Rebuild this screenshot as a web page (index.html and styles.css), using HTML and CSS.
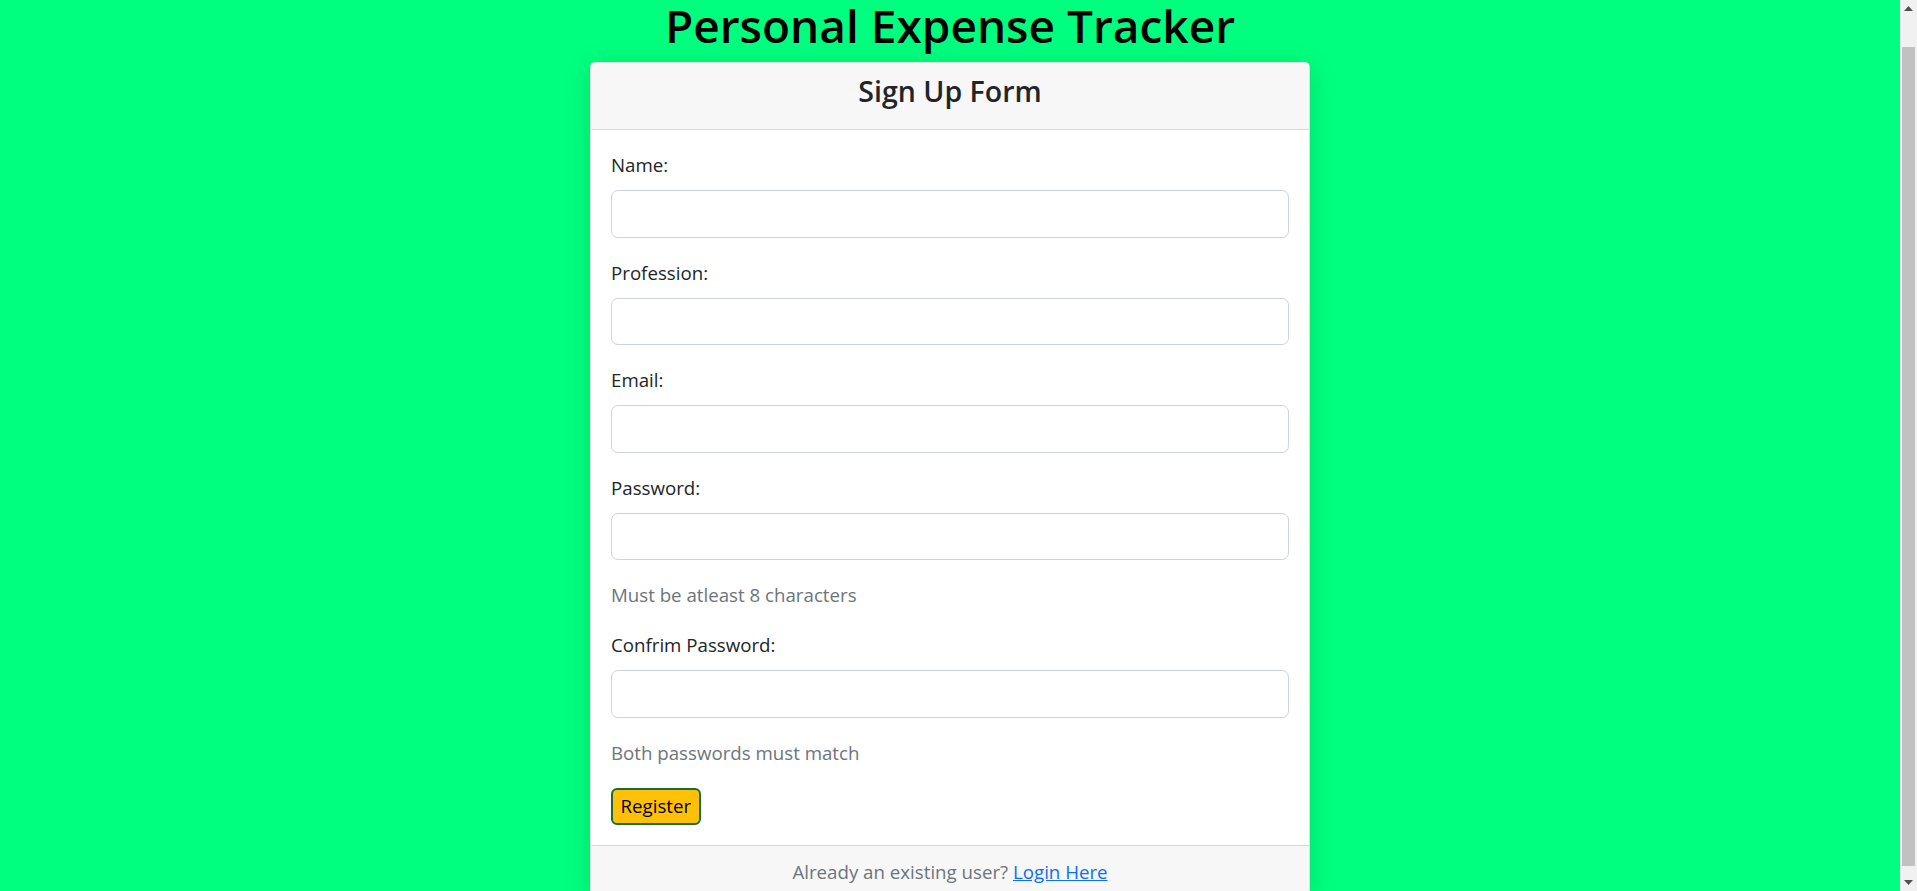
FILE: index.html
```html
<!DOCTYPE html>
<html lang="en">
<head>
<meta charset="utf-8">
<title>Personal Expense Tracker</title>
<link rel="stylesheet" href="styles.css">
</head>
<body>
<div class="page">
  <main class="main">
    <h1 class="title">Personal Expense Tracker</h1>
    <div class="card">
      <div class="card-header"><h4 class="card-title">Sign Up Form</h4></div>
      <form class="card-body">
        <div class="group"><label class="label">Name:</label><input class="input" type="text"></div>
        <div class="group"><label class="label">Profession:</label><input class="input" type="text"></div>
        <div class="group"><label class="label">Email:</label><input class="input" type="email"></div>
        <div class="group"><label class="label">Password:</label><input class="input" type="password"></div>
        <p class="hint">Must be atleast 8 characters</p>
        <div class="group"><label class="label">Confrim Password:</label><input class="input" type="password"></div>
        <p class="hint">Both passwords must match</p>
        <button class="register" type="button">Register</button>
      </form>
      <div class="card-footer">Already an existing user? <a class="link" href="#">Login Here</a></div>
    </div>
  </main>
  <div class="scrollbar">
    <div class="sb-btn"><svg width="9" height="5" viewBox="0 0 9 5"><polygon points="0,5 4.5,0 9,5" fill="#505050"/></svg></div>
    <div class="sb-track"><div class="sb-thumb"></div></div>
    <div class="sb-btn"><svg width="9" height="5" viewBox="0 0 9 5"><polygon points="0,0 9,0 4.5,5" fill="#505050"/></svg></div>
  </div>
</div>
</body>
</html>
```

FILE: styles.css
```css
* { box-sizing: border-box; }
html, body { margin: 0; padding: 0; height: 100%; overflow: hidden; }
body {
  font-family: "Open Sans", "Noto Sans", sans-serif;
  font-size: 18.7px;
  line-height: 30px;
  color: #212529;
  background: #00ff7f;
}
.page { display: flex; height: 100vh; }
.main { flex: 1; overflow: hidden; display: flex; flex-direction: column; align-items: center; }
.title {
  margin: 0 0 12px;
  font-size: 46px;
  line-height: 50px;
  font-weight: 600;
  color: #000;
}
.card {
  width: 720px;
  flex-shrink: 0;
  background: #fff;
  border: 1px solid rgba(0,0,0,.125);
  border-radius: 5px;
  box-shadow: 0 4px 28px rgba(0,0,0,.14);
}
.card-header {
  background: #f7f7f7;
  border-bottom: 1px solid rgba(0,0,0,.125);
  padding: 10px 20px;
  text-align: center;
  border-radius: 4px 4px 0 0;
}
.card-title { margin: 0 0 10px; font-size: 28.5px; line-height: 36px; font-weight: 600; }
.card-body { padding: 20px; display: flex; flex-direction: column; align-items: flex-start; }
.group { display: flex; flex-direction: column; align-self: stretch; margin-bottom: 20px; }
.label { display: block; margin-bottom: 10px; padding-top: 2px; margin-top: -2px; }
.input {
  height: 47.5px;
  border: 1px solid #ced4da;
  border-radius: 7px;
  padding: 7px 15px;
  font: inherit;
  background: #fff;
}
.hint { margin: 0 0 20px; color: #6c757d; padding-top: 2px; margin-top: -2px; }
.register {
  font: inherit;
  color: #000;
  background: #ffc107;
  border: 2px solid #1a6b34;
  border-radius: 6px;
  padding: 1.25px 7.5px;
  height: 37px;
  line-height: 30px;
}
.card-footer {
  background: #f7f7f7;
  border-top: 1px solid rgba(0,0,0,.125);
  padding: 11px 20px 9px;
  text-align: center;
  color: #6c757d;
}
.link { color: #0d6efd; text-decoration: underline; }
.scrollbar { width: 17px; flex-shrink: 0; background: #f1f1f1; display: flex; flex-direction: column; }
.sb-btn { height: 17px; display: flex; align-items: center; justify-content: center; }
.sb-track { flex: 1; padding: 30px 2px 8px; display: flex; }
.sb-thumb { flex: 1; background: #c1c1c1; }
```
